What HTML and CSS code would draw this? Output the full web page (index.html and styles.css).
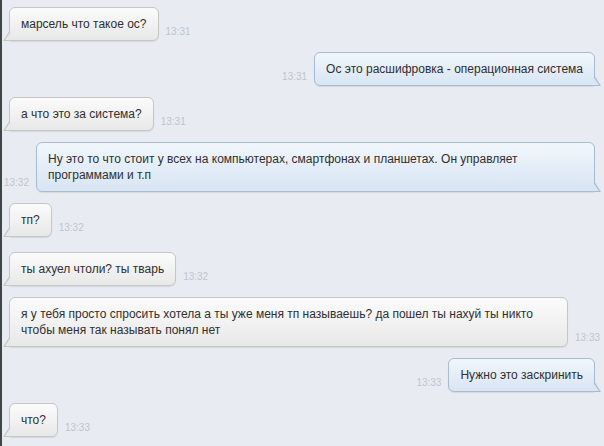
FILE: index.html
```html
<!DOCTYPE html>
<html lang="ru">

<head>
    <meta charset="UTF-8">
    <meta name="viewport" content="width=device-width, initial-scale=1.0">
    <title>Диалог</title>
    <link rel="stylesheet" href="styles.css">
</head>

<body>

    <div class="chat">
        <div class="row in">
            <div class="bubble">марсель что такое ос?</div>
            <span class="time">13:31</span>
        </div>
        <div class="row out">
            <span class="time">13:31</span>
            <div class="bubble">Ос это расшифровка - операционная система</div>
        </div>
        <div class="row in">
            <div class="bubble">а что это за система?</div>
            <span class="time">13:31</span>
        </div>
        <div class="row out">
            <span class="time">13:32</span>
            <div class="bubble">Ну это то что стоит у всех на компьютерах, смартфонах и планшетах. Он управляет программами и т.п</div>
        </div>
        <div class="row in">
            <div class="bubble">тп?</div>
            <span class="time">13:32</span>
        </div>
        <div class="row in spaced">
            <div class="bubble">ты ахуел чтоли? ты тварь</div>
            <span class="time">13:32</span>
        </div>
        <div class="row in">
            <div class="bubble">я у тебя просто спросить хотела а ты уже меня тп называешь? да пошел ты нахуй ты никто чтобы меня так называть понял нет</div>
            <span class="time">13:33</span>
        </div>
        <div class="row out">
            <span class="time">13:33</span>
            <div class="bubble">Нужно это заскринить</div>
        </div>
        <div class="row in">
            <div class="bubble">что?</div>
            <span class="time">13:33</span>
        </div>
    </div>

</body>

</html>
```

FILE: styles.css
```css
body,
html {
    height: 100%;
    margin: 0;
    padding: 0;
}

body {
    font-family: "Liberation Sans", Arial, sans-serif;
    background-color: #e8ebf2;
    border-left: 2px solid #3e4745;
    box-sizing: border-box;
    overflow: hidden;
}

.chat {
    display: flex;
    flex-direction: column;
    gap: 11px;
    padding-top: 7px;
}

.row {
    display: flex;
    align-items: flex-end;
    gap: 8px;
}

.row.in {
    padding-left: 7px;
    gap: 7px;
}

.row.out {
    justify-content: flex-end;
    padding-right: 9px;
    gap: 7px;
}

.row.spaced {
    margin-top: 4px;
}

.bubble {
    position: relative;
    box-sizing: border-box;
    max-width: 559px;
    padding: 8px 11px;
    border: 1px solid #c6c6c6;
    border-radius: 6px;
    background: linear-gradient(#fbfbfb, #e8e8e8);
    box-shadow: 0 1px 1px rgba(0, 0, 0, 0.08);
    font-size: 12px;
    line-height: 16px;
    color: #2f2f2f;
}

.time {
    flex-shrink: 0;
    padding-bottom: 4px;
    font-size: 10px;
    color: #c0c5cd;
}

/* хвостики у пузырей */
.bubble::before,
.bubble::after {
    content: "";
    position: absolute;
}

.in .bubble {
    border-bottom-left-radius: 2px;
}

.in .bubble::before {
    left: -7px;
    bottom: -1px;
    width: 7px;
    height: 11px;
    background: #c6c6c6;
    clip-path: polygon(100% 0, 0 100%, 100% 100%);
}

.in .bubble::after {
    left: -5px;
    bottom: 0;
    width: 6px;
    height: 9px;
    background: #e8e8e8;
    clip-path: polygon(100% 0, 0 100%, 100% 100%);
}

.out .bubble {
    border-color: #a9bbcf;
    border-bottom-right-radius: 2px;
    background: linear-gradient(#f1f6fc, #d8e5f3);
}

.out .bubble::before {
    right: -7px;
    bottom: -1px;
    width: 7px;
    height: 11px;
    background: #a9bbcf;
    clip-path: polygon(0 0, 0 100%, 100% 100%);
}

.out .bubble::after {
    right: -5px;
    bottom: 0;
    width: 6px;
    height: 9px;
    background: #d8e5f3;
    clip-path: polygon(0 0, 0 100%, 100% 100%);
}
```
